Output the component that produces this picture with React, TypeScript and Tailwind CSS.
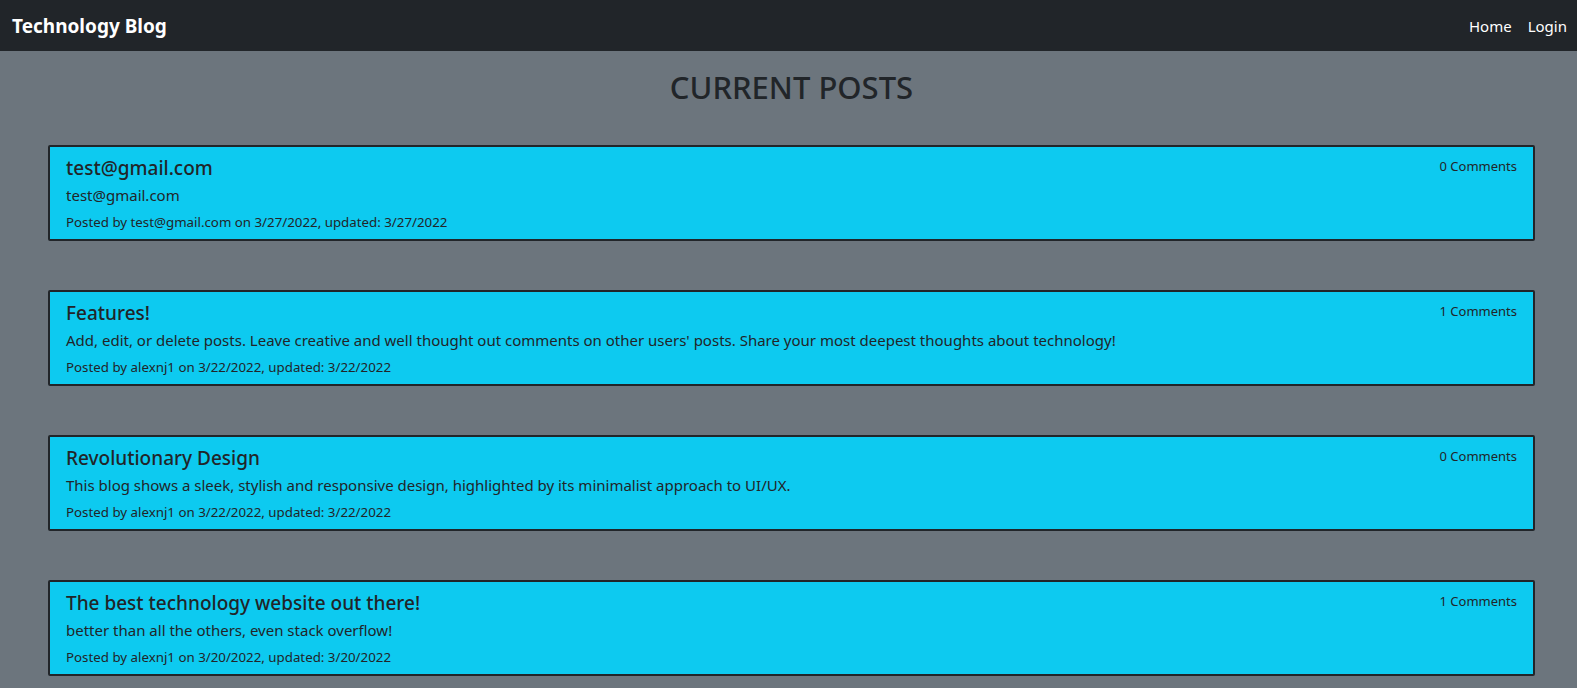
import React from "react";

const posts = [
  {
    title: "test@gmail.com",
    body: "test@gmail.com",
    author: "test@gmail.com",
    date: "3/27/2022",
    comments: 0,
  },
  {
    title: "Features!",
    body: "Add, edit, or delete posts. Leave creative and well thought out comments on other users' posts. Share your most deepest thoughts about technology!",
    author: "alexnj1",
    date: "3/22/2022",
    comments: 1,
  },
  {
    title: "Revolutionary Design",
    body: "This blog shows a sleek, stylish and responsive design, highlighted by its minimalist approach to UI/UX.",
    author: "alexnj1",
    date: "3/22/2022",
    comments: 0,
  },
  {
    title: "The best technology website out there!",
    body: "better than all the others, even stack overflow!",
    author: "alexnj1",
    date: "3/20/2022",
    comments: 1,
  },
];

export default function App() {
  return (
    <div className="min-h-screen bg-[#6c757d] font-['Noto_Sans',_'Open_Sans',_sans-serif] text-[#212529]">
      <nav className="h-[51px] bg-[#212529] flex items-center justify-between pl-[12px] pr-[10px]">
        <a className="text-white text-[19px] font-bold leading-[24px]">Technology Blog</a>
        <div className="flex items-center gap-[16px] text-white text-[15px] leading-[24px]">
          <a>Home</a>
          <a>Login</a>
        </div>
      </nav>
      <main className="ml-[48px] mr-[42px] pb-[12px]">
        <h1 className="text-center text-[31px] leading-[38px] font-medium pt-[17px] pb-[39px]">
          CURRENT POSTS
        </h1>
        <div className="flex flex-col gap-[49px]">
          {posts.map((p) => (
            <div
              key={p.title}
              className="h-[96px] border-2 border-[#212529] rounded-[2px] bg-[#0dcaf0] px-[16px] pt-[7px]"
            >
              <div className="flex justify-between items-start">
                <h5 className="text-[19px] leading-[28px] font-medium">{p.title}</h5>
                <span className="text-[13px] leading-[20px] mt-[2px]">{p.comments} Comments</span>
              </div>
              <p className="text-[15px] leading-[24px] mt-[1px]">{p.body}</p>
              <p className="text-[13.3px] leading-[22px] mt-[4px]">
                Posted by {p.author} on {p.date}, updated: {p.date}
              </p>
            </div>
          ))}
        </div>
      </main>
    </div>
  );
}
